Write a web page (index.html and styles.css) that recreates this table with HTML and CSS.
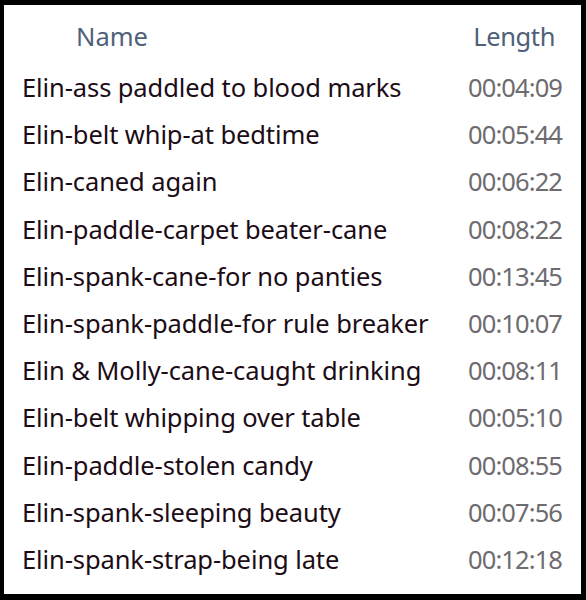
FILE: index.html
```html
<!DOCTYPE html>
<html lang="en">
<head>
  <meta charset="UTF-8">
  <title>Videos</title>
  <link rel="stylesheet" href="styles.css">
</head>
<body>
  <div class="frame">
    <div class="list">
      <div class="head">
        <span class="col-name">Name</span>
        <span class="col-length">Length</span>
      </div>
      <div class="row"><span class="name">Elin-ass paddled to blood marks</span><span class="time">00:04:09</span></div>
      <div class="row"><span class="name">Elin-belt whip-at bedtime</span><span class="time">00:05:44</span></div>
      <div class="row"><span class="name">Elin-caned again</span><span class="time">00:06:22</span></div>
      <div class="row"><span class="name">Elin-paddle-carpet beater-cane</span><span class="time">00:08:22</span></div>
      <div class="row"><span class="name">Elin-spank-cane-for no panties</span><span class="time">00:13:45</span></div>
      <div class="row"><span class="name">Elin-spank-paddle-for rule breaker</span><span class="time">00:10:07</span></div>
      <div class="row"><span class="name">Elin &amp; Molly-cane-caught drinking</span><span class="time">00:08:11</span></div>
      <div class="row"><span class="name">Elin-belt whipping over table</span><span class="time">00:05:10</span></div>
      <div class="row"><span class="name">Elin-paddle-stolen candy</span><span class="time">00:08:55</span></div>
      <div class="row"><span class="name">Elin-spank-sleeping beauty</span><span class="time">00:07:56</span></div>
      <div class="row"><span class="name">Elin-spank-strap-being late</span><span class="time">00:12:18</span></div>
    </div>
  </div>
</body>
</html>
```

FILE: styles.css
```css
html, body {
  margin: 0;
  padding: 0;
  background: #000;
}
.frame {
  box-sizing: border-box;
  width: 586px;
  height: 600px;
  border-style: solid;
  border-color: #000;
  border-width: 5px 5px 6px 4px;
  background: #fff;
  font-family: "Noto Sans", sans-serif;
  font-size: 25.5px;
}
.list {
  padding: 0 19px 0 18px;
}
.head, .row {
  display: flex;
  justify-content: space-between;
  height: 47.2px;
  line-height: 47.2px;
  white-space: nowrap;
}
.head {
  height: 59px;
  line-height: 62px;
  color: #4f6079;
}
.col-name {
  padding-left: 54px;
}
.col-length {
  padding-right: 7px;
  letter-spacing: -0.4px;
}
.row {
  color: #1c0c16;
}
.name {
  letter-spacing: -0.1px;
}
.time {
  color: #6e6b70;
  letter-spacing: -0.9px;
}
```
